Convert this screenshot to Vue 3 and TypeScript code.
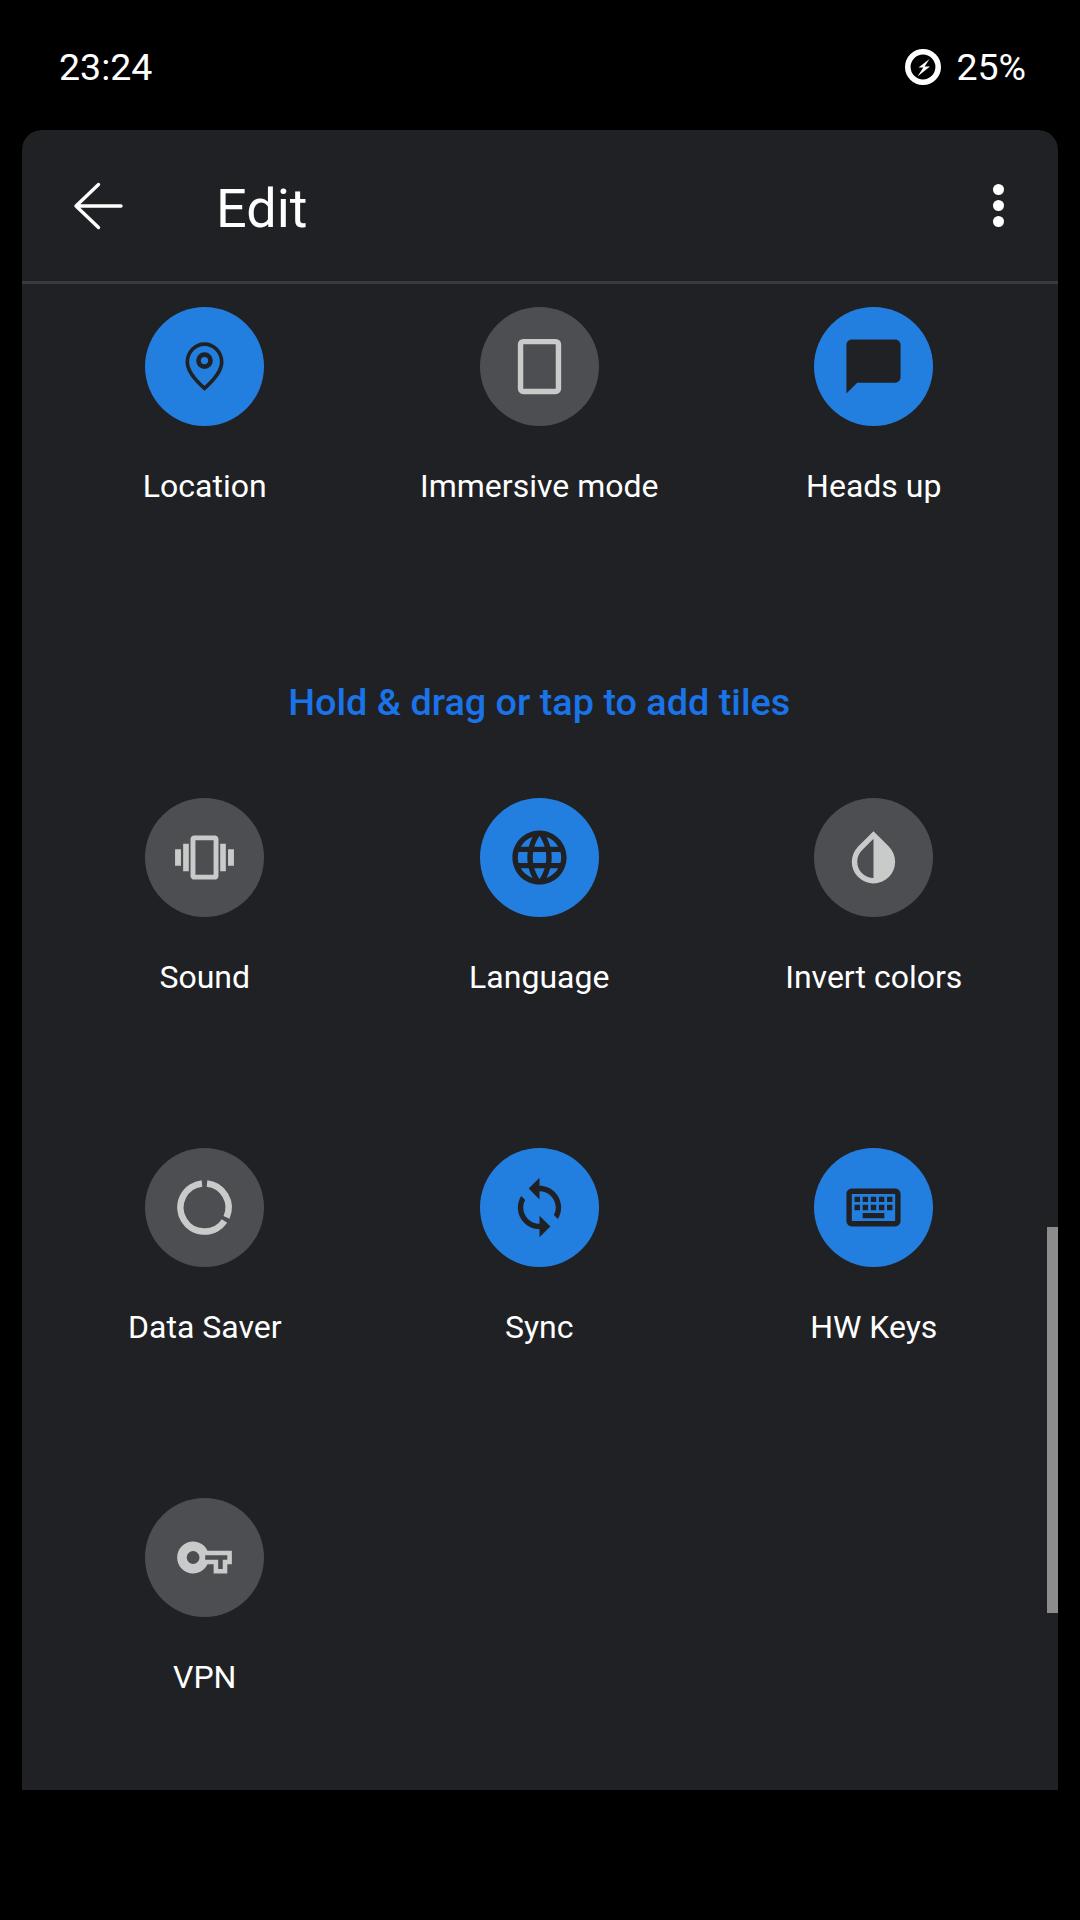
<script setup lang="ts">
  interface Tile {
    label: string
    active: boolean
    icon: string
    view?: string
  }

  const wide = '-1.25 -1.25 26.5 26.5'

  const currentTiles: Tile[] = [
    { label: 'Location', active: true, icon: 'pin', view: wide },
    { label: 'Immersive mode', active: false, icon: 'immersive' },
    { label: 'Heads up', active: true, icon: 'chat' },
  ]

  const moreTiles: Tile[] = [
    { label: 'Sound', active: false, icon: 'vibrate', view: wide },
    { label: 'Language', active: true, icon: 'globe' },
    { label: 'Invert colors', active: false, icon: 'drop' },
    { label: 'Data Saver', active: false, icon: 'saver' },
    { label: 'Sync', active: true, icon: 'sync' },
    { label: 'HW Keys', active: true, icon: 'keyboard' },
    { label: 'VPN', active: false, icon: 'key', view: '-2.25 -2.25 28.5 28.5' },
  ]

  const paths: Record<string, string> = {
    chat: 'M20 2H4c-1.1 0-2 .9-2 2v18l4-4h14c1.1 0 2-.9 2-2V4c0-1.1-.9-2-2-2z',
    vibrate:
      'M0 8.6h2.4v6.8H0zM3.3 6.4h2.3v11.2H3.3zM18.4 6.4h2.3v11.2h-2.3zM21.6 8.6H24v6.8h-2.4zM7.8 3h8.4c.83 0 1.5.67 1.5 1.5v15c0 .83-.67 1.5-1.5 1.5H7.8c-.83 0-1.5-.67-1.5-1.5v-15C6.3 3.67 6.97 3 7.8 3zM8.3 5v14h7.4V5z',
    globe:
      'M11.99 2C6.47 2 2 6.48 2 12s4.47 10 9.99 10C17.52 22 22 17.52 22 12S17.52 2 11.99 2zm6.93 6h-2.95c-.32-1.25-.78-2.45-1.38-3.56 1.84.63 3.37 1.91 4.33 3.56zM12 4.04c.83 1.2 1.48 2.53 1.91 3.96h-3.82c.43-1.43 1.08-2.76 1.91-3.96zM4.26 14C4.1 13.36 4 12.69 4 12s.1-1.36.26-2h3.38c-.08.66-.14 1.32-.14 2 0 .68.06 1.34.14 2H4.26zm.82 2h2.95c.32 1.25.78 2.45 1.38 3.56-1.84-.63-3.37-1.9-4.33-3.56zm2.95-8H5.08c.96-1.66 2.49-2.93 4.33-3.56C8.81 5.55 8.35 6.75 8.03 8zM12 19.96c-.83-1.2-1.48-2.53-1.91-3.96h3.82c-.43 1.43-1.08 2.76-1.91 3.96zM14.34 14H9.66c-.09-.66-.16-1.32-.16-2 0-.68.07-1.35.16-2h4.68c.09.65.16 1.32.16 2 0 .68-.07 1.34-.16 2zm.25 5.56c.6-1.11 1.06-2.31 1.38-3.56h2.95c-.96 1.65-2.49 2.93-4.33 3.56zM16.36 14c.08-.66.14-1.32.14-2 0-.68-.06-1.34-.14-2h3.38c.16.64.26 1.31.26 2s-.1 1.36-.26 2h-3.38z',
    drop: 'M17.66 7.93L12 2.27 6.34 7.93c-3.12 3.12-3.12 8.19 0 11.31C7.9 20.8 9.95 21.58 12 21.58c2.05 0 4.1-.78 5.66-2.34 3.12-3.12 3.12-8.19 0-11.31zM12 19.59c-1.6 0-3.11-.62-4.24-1.76C6.62 16.69 6 15.19 6 13.59s.62-3.11 1.76-4.24L12 5.1v14.49z',
    sync: 'M12 4V1L8 5l4 4V6c3.31 0 6 2.69 6 6 0 1.01-.25 1.97-.7 2.8l1.46 1.46C19.54 15.03 20 13.57 20 12c0-4.42-3.58-8-8-8zm0 14c-3.31 0-6-2.69-6-6 0-1.01.25-1.97.7-2.8L5.24 7.74C4.46 8.97 4 10.43 4 12c0 4.42 3.58 8 8 8v3l4-4-4-4v3z',
    keyboard:
      'M20 7v10H4V7h16m0-2H4c-1.1 0-1.99.9-1.99 2L2 17c0 1.1.9 2 2 2h16c1.1 0 2-.9 2-2V7c0-1.1-.9-2-2-2zm-9 3h2v2h-2zm0 3h2v2h-2zM8 8h2v2H8zm0 3h2v2H8zm-3 0h2v2H5zm0-3h2v2H5zm3 6h8v2H8zm6-3h2v2h-2zm0-3h2v2h-2zm3 3h2v2h-2zm0-3h2v2h-2z',
    key: 'M22 19h-6v-4h-2.68c-1.14 2.42-3.6 4-6.32 4-3.86 0-7-3.14-7-7s3.14-7 7-7c2.72 0 5.17 1.58 6.32 4H24v6h-2v4zM18 17h2v-4h2v-2H12.3v2H18v4zM7 9.2a2.8 2.8 0 1 0 0 5.6 2.8 2.8 0 0 0 0-5.6z',
  }
</script>

<template>
  <div class="screen">
    <div class="status">
      <span>23:24</span>
      <div class="status__right">
        <svg class="status__charge" viewBox="0 0 36 36">
          <circle class="status__ring" cx="18" cy="18" r="15.2" />
          <path class="status__bolt" d="M24.5 10 13.5 18.4h4.8L12.5 27.5 25 17.6h-5.4z" />
        </svg>
        <span>25%</span>
      </div>
    </div>

    <div class="panel">
      <header class="bar">
        <svg class="bar__back" viewBox="0 0 50 48">
          <path d="M48 24H3.5M25.5 2.5 3 24l22.5 21.5" />
        </svg>
        <h1 class="bar__title">Edit</h1>
        <div class="bar__more">
          <i></i>
          <i></i>
          <i></i>
        </div>
      </header>

      <div class="list">
        <template v-for="(group, g) in [currentTiles, moreTiles]" :key="g">
          <p v-if="g === 1" class="list__hint">Hold &amp; drag or tap to add tiles</p>
          <div class="grid">
            <div v-for="tile in group" :key="tile.label" class="tile">
              <div class="tile__circle" :class="{ 'tile__circle--on': tile.active }">
                <svg class="tile__icon" :viewBox="tile.view || '0 0 24 24'">
                  <template v-if="tile.icon === 'pin'">
                    <path
                      class="stroke"
                      stroke-width="1.5"
                      d="M12 20.9c-4.6-4-7-7.6-7-10.7C5 6 8.3 2.9 12 2.9s7 3.1 7 7.3c0 3.1-2.4 6.7-7 10.7z"
                    />
                    <circle class="stroke" stroke-width="1.9" cx="12" cy="9.6" r="2.45" />
                  </template>
                  <rect
                    v-else-if="tile.icon === 'immersive'"
                    class="stroke"
                    stroke-width="2"
                    x="5"
                    y="2.8"
                    width="14"
                    height="18.4"
                    rx="1"
                  />
                  <path
                    v-else-if="tile.icon === 'saver'"
                    class="stroke"
                    stroke-width="2.4"
                    d="M12.93 3.15A8.9 8.9 0 0 1 20.13 15.62M19.38 16.98A8.9 8.9 0 1 1 11.07 3.15"
                  />
                  <path v-else fill-rule="evenodd" :d="paths[tile.icon]" />
                </svg>
              </div>
              <span class="tile__label">{{ tile.label }}</span>
            </div>
          </div>
        </template>
      </div>

      <div class="scrollbar"></div>
    </div>
  </div>
</template>

<style>
  html,
  body {
    margin: 0;
    background: #000;
  }
</style>

<style scoped>
  .screen {
    width: 1080px;
    height: 1920px;
    overflow: hidden;
    background: #000;
    color: #fff;
    font-family: Roboto, "Liberation Sans", sans-serif;
  }
  .status {
    height: 130px;
    box-sizing: border-box;
    padding: 3px 54px 0 59px;
    display: flex;
    align-items: center;
    justify-content: space-between;
    font-size: 37.5px;
  }
  .status__right {
    display: flex;
    align-items: center;
    gap: 15px;
  }
  .status__charge {
    width: 36px;
    height: 36px;
    display: block;
  }
  .status__ring {
    fill: none;
    stroke: #fff;
    stroke-width: 5.6;
  }
  .status__bolt {
    fill: #fff;
  }
  .panel {
    position: relative;
    height: 1660px;
    margin: 0 22px;
    border-radius: 20px 20px 0 0;
    background: #202124;
    overflow: hidden;
  }
  .bar {
    height: 151px;
    display: flex;
    align-items: center;
    border-bottom: 3px solid #393a3e;
  }
  .bar__back {
    width: 50px;
    height: 48px;
    margin-left: 51px;
    margin-top: 1px;
    fill: none;
    stroke: #fff;
    stroke-width: 3.4;
    stroke-linecap: round;
    stroke-linejoin: round;
  }
  .bar__title {
    margin: 5px 0 0 93px;
    font-size: 54px;
    font-weight: 400;
  }
  .bar__more {
    margin-left: auto;
    margin-right: 54px;
    display: flex;
    flex-direction: column;
    gap: 5px;
  }
  .bar__more i {
    display: block;
    width: 11px;
    height: 11px;
    border-radius: 50%;
    background: #fff;
  }
  .list {
    padding: 23px 17px 0 15.5px;
  }
  .list__hint {
    margin: 172px 0 72px;
    height: 48px;
    line-height: 48px;
    text-align: center;
    font-size: 37.8px;
    font-weight: 500;
    color: #1a73e8;
  }
  .grid {
    display: grid;
    grid-template-columns: repeat(3, 1fr);
    row-gap: 151px;
  }
  .tile {
    display: flex;
    flex-direction: column;
    align-items: center;
  }
  .tile__circle {
    width: 119px;
    height: 119px;
    border-radius: 50%;
    display: flex;
    align-items: center;
    justify-content: center;
    background: #4d4e51;
    color: #c9cbca;
  }
  .tile__circle--on {
    background: #227fe0;
    color: #202124;
  }
  .tile__icon {
    width: 65px;
    height: 65px;
    fill: currentColor;
  }
  .stroke {
    fill: none;
    stroke: currentColor;
  }
  .tile__label {
    margin-top: 40px;
    height: 40px;
    line-height: 40px;
    font-size: 32px;
    white-space: nowrap;
  }
  .scrollbar {
    position: absolute;
    right: 0;
    top: 1097px;
    width: 11px;
    height: 386px;
    background: #8c8c8c;
  }
</style>
